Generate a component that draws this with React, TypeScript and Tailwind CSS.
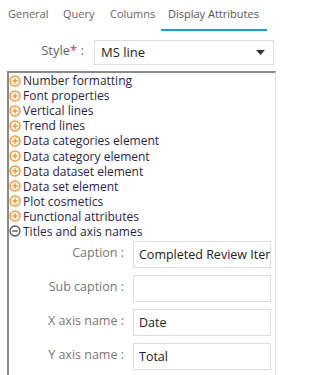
import React from "react";

const font = { fontFamily: '"Open Sans", "Noto Sans", sans-serif' };

function PlusIcon() {
  return (
    <svg width="12" height="12" viewBox="0 0 12 12" className="shrink-0">
      <circle cx="6" cy="6" r="5" fill="none" stroke="#f39a3c" strokeWidth="1.5" />
      <path d="M3.2 6h5.6M6 3.2v5.6" stroke="#f39a3c" strokeWidth="1.5" />
    </svg>
  );
}

function MinusIcon() {
  return (
    <svg width="12" height="12" viewBox="0 0 12 12" className="shrink-0">
      <circle cx="6" cy="6" r="5" fill="none" stroke="#555" strokeWidth="1.3" />
      <path d="M3.2 6h5.6" stroke="#555" strokeWidth="1.4" />
    </svg>
  );
}

const items = [
  "Number formatting",
  "Font properties",
  "Vertical lines",
  "Trend lines",
  "Data categories element",
  "Data category element",
  "Data dataset element",
  "Data set element",
  "Plot cosmetics",
  "Functional attributes",
];

const fields = [
  { label: "Caption", value: "Completed Review Items" },
  { label: "Sub caption", value: "" },
  { label: "X axis name", value: "Date" },
  { label: "Y axis name", value: "Total" },
];

export default function App() {
  return (
    <div className="w-[336px] h-[375px] bg-white overflow-hidden" style={font}>
      {/* Tabs */}
      <div className="flex items-end h-[31px] text-[11px] text-[#666] whitespace-nowrap">
        <div className="pl-[8px] w-[55px] pb-[9px]">General</div>
        <div className="pl-[8px] w-[46px] pb-[9px]">Query</div>
        <div className="pl-[9px] w-[52px] pb-[9px]">Columns</div>
        <div className="ml-[8px] w-[106px] pl-[7px] pb-[7px] border-b-2 border-[#1d9bd6] text-[#555]">
          Display Attributes
        </div>
      </div>

      {/* Style row */}
      <div className="flex items-center mt-[9px] h-[25px]">
        <div className="w-[86px] text-right text-[13px] text-[#666] pr-[2px] -mt-[3px]">
          Style<span className="text-[#c0306a]">*</span> :
        </div>
        <div className="ml-[8px] w-[180px] h-[25px] border border-[#ddd] flex items-center justify-between pl-[6px] pr-[8px]">
          <span className="text-[13px] text-[#222]">MS line</span>
          <svg width="9" height="6" viewBox="0 0 9 6">
            <path d="M0 0h9L4.5 5z" fill="#333" />
          </svg>
        </div>
      </div>

      {/* Panel */}
      <div className="ml-[7px] mt-[6px] w-[269px] h-[320px] border-l-2 border-t-2 border-l-[#8a8a8a] border-t-[#8a8a8a] border-r border-r-[#ddd]">
        <div className="text-[12px] text-[#26264a]">
          {items.map((t) => (
            <div key={t} className="flex items-center gap-[2px] h-[15.1px] leading-[15px]">
              <PlusIcon />
              <span className="leading-[15px]">{t}</span>
            </div>
          ))}
          <div className="flex items-center gap-[2px] h-[15.1px] leading-[15px]">
            <MinusIcon />
            <span className="leading-[15px]">Titles and axis names</span>
          </div>
        </div>

        <div className="flex flex-col gap-[7px] mt-[2px]">
          {fields.map((f) => (
            <div key={f.label} className="flex items-start">
              <div className="w-[116px] text-right text-[12.5px] text-[#777] pt-[3px] pr-[1px] whitespace-nowrap">
                {f.label} :
              </div>
              <div className="ml-[8px] w-[138px] h-[27px] border border-[#ddd] flex items-center pl-[5px] overflow-hidden whitespace-nowrap">
                <span className="text-[12.5px] text-[#222] mt-[2px]">{f.value}</span>
              </div>
            </div>
          ))}
        </div>
      </div>
    </div>
  );
}
